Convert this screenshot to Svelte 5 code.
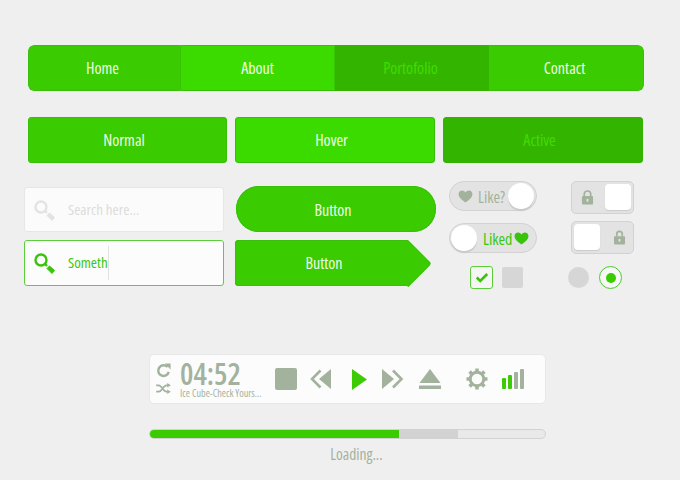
<script>
  const nav = [
    { label: 'Home', cls: '' },
    { label: 'About', cls: 'hover' },
    { label: 'Portofolio', cls: 'active' },
    { label: 'Contact', cls: '' }
  ];
  const buttons = [
    { label: 'Normal', cls: '' },
    { label: 'Hover', cls: 'hover' },
    { label: 'Active', cls: 'active' }
  ];
</script>

<main class="page">
  <nav class="nav">
    {#each nav as item}
      <div class="nav-item {item.cls}">{item.label}</div>
    {/each}
  </nav>

  <div class="states">
    {#each buttons as b}
      <div class="state {b.cls}">{b.label}</div>
    {/each}
  </div>

  <div class="controls">
    <div class="col-search">
      <div class="search">
        <svg class="mag" viewBox="0 0 24 24" width="24" height="24"><circle cx="8" cy="8" r="5.500" fill="none" stroke="#e3e3e3" stroke-width="2.400"/><path d="M12 12l2 2" stroke="#e3e3e3" stroke-width="2.400"/><path d="M14 16.500l2.500-2.500 5 4.500-2.500 3z" fill="#e3e3e3" stroke="#e3e3e3" stroke-linejoin="round"/></svg>
        <span class="placeholder">Search here...</span>
      </div>
      <div class="search focus">
        <svg class="mag" viewBox="0 0 24 24" width="24" height="24"><circle cx="8" cy="8" r="5.500" fill="none" stroke="#38c40a" stroke-width="2.400"/><path d="M12 12l2 2" stroke="#38c40a" stroke-width="2.400"/><path d="M14 16.500l2.500-2.500 5 4.500-2.500 3z" fill="#38c40a" stroke="#38c40a" stroke-linejoin="round"/></svg>
        <span class="typed">Someth</span><span class="caret"></span>
      </div>
    </div>

    <div class="col-buttons">
      <div class="pill">Button</div>
      <div class="arrow"><span>Button</span></div>
    </div>

    <div class="col-toggles">
      <div class="toggle">
        <svg class="heart" viewBox="0 0 16 14" width="15" height="13"><path d="M8 13.500C3 10 .5 7.500.5 4.500.5 2 2.300.500 4.300.500 5.800.500 7.200 1.300 8 2.800 8.800 1.300 10.200.500 11.700.500c2 0 3.800 1.500 3.800 4 0 3-2.500 5.500-7.500 9z" fill="#a3b29c"/></svg>
        <span class="like">Like?</span>
        <span class="knob"></span>
      </div>
      <div class="toggle on">
        <span class="knob"></span>
        <span class="liked">Liked</span>
        <svg class="heart" viewBox="0 0 16 14" width="15" height="13"><path d="M8 13.500C3 10 .5 7.500.5 4.500.5 2 2.300.500 4.300.500 5.800.500 7.200 1.300 8 2.800 8.800 1.300 10.200.500 11.700.500c2 0 3.800 1.500 3.800 4 0 3-2.500 5.500-7.500 9z" fill="#38c40a"/></svg>
      </div>
      <div class="checks">
        <div class="check">
          <svg viewBox="0 0 16 12" width="14" height="11"><path d="M2 6l4 4 8-8" fill="none" stroke="#38c40a" stroke-width="3"/></svg>
        </div>
        <div class="box"></div>
      </div>
    </div>

    <div class="col-locks">
      <div class="lock">
        <svg viewBox="0 0 14 16" width="13" height="15"><path d="M3.500 7V4.500a3.500 3.500 0 0 1 7 0V7" fill="none" stroke="#a3b29c" stroke-width="1.800"/><rect x="1" y="6.500" width="12" height="9" rx="1" fill="#a3b29c"/><rect x="6" y="9.500" width="2" height="3" fill="#e3e3e3"/></svg>
        <span class="sq"></span>
      </div>
      <div class="lock off">
        <span class="sq"></span>
        <svg viewBox="0 0 12 16" width="11" height="15"><path d="M3 7V4.300a3 3 0 0 1 6 0V7" fill="none" stroke="#a3b29c" stroke-width="1.800"/><rect x="0" y="6.500" width="12" height="9" rx="1" fill="#a3b29c"/><rect x="5" y="9.500" width="2" height="3" fill="#e3e3e3"/></svg>
      </div>
      <div class="radios">
        <div class="radio-off"></div>
        <div class="radio-on"><span></span></div>
      </div>
    </div>
  </div>

  <section class="player">
    <div class="modes">
      <svg viewBox="0 0 16 16" width="15" height="15"><path d="M13.600 9.500A5.700 5.700 0 1 1 12.300 4.300" fill="none" stroke="#a3b29c" stroke-width="2.600"/><path d="M9.500 .5h6v6.500z" fill="#a3b29c"/></svg>
      <svg viewBox="0 0 16 12" width="15" height="11"><path d="M0 2.500h3c3 0 5 7 8 7h1.500M0 9.500h3c3 0 5-7 8-7h1.500" fill="none" stroke="#a3b29c" stroke-width="1.900"/><path d="M12 0l4 2.500-4 2.500zM12 7l4 2.500-4 2.500z" fill="#a3b29c"/></svg>
    </div>
    <div class="track">
      <div class="time">04:52</div>
      <div class="song">Ice Cube-Check Yours...</div>
    </div>
    <div class="stop"></div>
    <svg class="rew" viewBox="0 0 22 20" width="22" height="20"><path d="M21 0v20L9 10z" fill="#a3b29c"/><path d="M10.500 1.500L2 10l8.500 8.500" fill="none" stroke="#a3b29c" stroke-width="2.600"/></svg>
    <svg class="play" viewBox="0 0 15 21" width="15" height="21"><path d="M0 0l15 10.500L0 21z" fill="#3ccb05"/></svg>
    <svg class="fwd" viewBox="0 0 22 20" width="22" height="20"><path d="M0 0v20l12-10z" fill="#a3b29c"/><path d="M11 1.500l8.500 8.500-8.500 8.500" fill="none" stroke="#a3b29c" stroke-width="2.600"/></svg>
    <svg class="eject" viewBox="0 0 22 20" width="22" height="20"><path d="M11 0l10.500 14H.5z" fill="#a3b29c"/><rect y="16.500" width="22" height="3.500" fill="#a3b29c"/></svg>
    <svg class="gear" viewBox="0 0 22 22" width="22" height="22"><circle cx="11" cy="11" r="6.800" fill="none" stroke="#a3b29c" stroke-width="3"/><g stroke="#a3b29c" stroke-width="3.600"><path d="M11 .5v3M11 18.500v3M.5 11h3M18.500 11h3M3.600 3.600l2.100 2.100M16.300 16.300l2.100 2.100M18.400 3.600l-2.100 2.100M5.700 16.300l-2.100 2.100"/></g></svg>
    <div class="signal">
      <span class="s1"></span><span class="s2"></span><span class="s3"></span><span class="s4"></span>
    </div>
  </section>

  <div class="progress">
    <div class="fill"></div>
    <div class="buffer"></div>
  </div>
  <div class="loading">Loading...</div>
</main>

<style>
  :global(body) {
    margin: 0;
    background: #efefef;
  }
  .page {
    width: 680px;
    height: 480px;
    box-sizing: border-box;
    padding-top: 45px;
    overflow: hidden;
    font-family: "Open Sans", "Noto Sans", sans-serif;
    font-stretch: 75%;
    font-size: 16px;
    color: #f1fbe9;
  }
  .nav {
    display: grid;
    grid-template-columns: 153px 154px 154px 155px;
    width: 616px;
    height: 46px;
    margin-left: 28px;
    border-radius: 6px;
    overflow: hidden;
  }
  .nav-item {
    display: flex;
    align-items: center;
    justify-content: center;
    box-sizing: border-box;
    background: #3acc00;
    border: 1px solid #38c00a;
    border-width: 1px 0;
    border-right: 1px solid #37c403;
  }
  .nav-item:first-child { border-left: 1px solid #38c00a; border-radius: 6px 0 0 6px; padding-right: 4px; }
  .nav-item:last-child { border-right: 1px solid #38c00a; border-radius: 0 6px 6px 0; padding-right: 3px; }
  .nav-item.hover { background: #3cdb00; }
  .nav-item.active { background: #33b500; color: #41dc00; border-color: #33b500; padding-right: 2px; }
  .states {
    display: flex;
    gap: 8px;
    margin: 26px 0 0 28px;
  }
  .state {
    width: 200px;
    height: 46px;
    box-sizing: border-box;
    display: flex;
    align-items: center;
    justify-content: center;
    padding-right: 7px;
    background: #3acc00;
    border: 1px solid #38bf0a;
    border-radius: 3px;
  }
  .state:first-child { width: 199px; }
  .state.hover { background: #3cdb00; }
  .state.active { background: #33b500; color: #41dc00; border-color: #33b500; }
  .controls {
    display: flex;
    align-items: flex-start;
    margin: 18px 0 0 24px;
  }
  .col-search {
    width: 200px;
    margin-top: 6px;
    display: flex;
    flex-direction: column;
    gap: 8px;
  }
  .search {
    height: 46px;
    box-sizing: border-box;
    display: flex;
    align-items: center;
    background: #fbfbfb;
    border: 1px solid #e6e6e6;
    border-radius: 3px;
    padding-left: 8px;
    font-size: 15px;
  }
  .search:first-child { height: 45px; }
  .mag { flex: none; margin-top: 2px; }
  .placeholder { margin: -2px 0 0 11px; color: #dcdcdc; }
  .search.focus { border-color: #5cce3a; background: #fcfcfc; }
  .typed { margin: -2px 0 0 11px; color: #3cc70b; }
  .caret { width: 1px; height: 34px; background: #e2e2e2; }
  .col-buttons {
    width: 201px;
    margin: 5px 0 0 11px;
    display: flex;
    flex-direction: column;
    gap: 8px;
  }
  .pill {
    width: 200px;
    height: 46px;
    box-sizing: border-box;
    padding: 1px 6px 0 0;
    margin-left: 1px;
    display: flex;
    align-items: center;
    justify-content: center;
    background: #3acc00;
    border-radius: 23px;
    box-shadow: inset 0 0 0 1px #38c00a;
  }
  .arrow {
    position: relative;
    width: 173px;
    height: 46px;
    box-sizing: border-box;
    padding: 0 0 0 5px;
    display: flex;
    align-items: center;
    justify-content: center;
    background: #3acc00;
    border-radius: 4px 0 0 4px;
    box-shadow: inset 1px 0 #38c00a, inset 0 1px #38c00a, inset 0 -1px #38c00a;
  }
  .arrow::after {
    content: "";
    position: absolute;
    top: 6.75px;
    right: -16.25px;
    width: 32.5px;
    height: 32.5px;
    transform: rotate(45deg);
    border-radius: 0 3px 0 0;
    background: #3acc00;
    box-shadow: inset -1px 1px #38c00a;
  }
  .arrow span { position: relative; z-index: 1; }
  .col-toggles {
    width: 88px;
    margin-left: 13px;
    display: flex;
    flex-direction: column;
    gap: 12px;
  }
  .toggle {
    height: 30px;
    box-sizing: border-box;
    display: flex;
    align-items: center;
    background: #e3e3e3;
    border: 1px solid #d2d2d2;
    border-radius: 15px;
    padding: 0 2px 0 8px;
  }
  .toggle.on { padding: 0 8px 0 1px; }
  .toggle .knob {
    flex: none;
    width: 26px;
    height: 26px;
    border-radius: 50%;
    background: #fff;
    box-shadow: 0 2px 1px #c9c9c9;
    margin-left: auto;
    margin-top: -1px;
  }
  .toggle.on .knob { margin-left: 0; }
  .heart { flex: none; }
  .like { margin: 1px 0 0 5px; color: #a3b29c; }
  .liked { margin: 1px 2px 0 6px; color: #3cc70b; }
  .checks {
    display: flex;
    align-items: center;
    gap: 9px;
    margin: 1px 0 0 21px;
  }
  .check {
    width: 23px;
    height: 23px;
    box-sizing: border-box;
    display: flex;
    align-items: center;
    justify-content: center;
    border: 1px solid #5cce3a;
    border-radius: 3px;
    background: #f5f5f5;
  }
  .box {
    width: 21px;
    height: 21px;
    background: #d6d6d6;
    border-radius: 2px;
  }
  .col-locks {
    width: 63px;
    margin-left: 34px;
    display: flex;
    flex-direction: column;
    gap: 7px;
  }
  .lock {
    height: 33px;
    box-sizing: border-box;
    display: flex;
    align-items: center;
    justify-content: space-between;
    background: #e3e3e3;
    border: 1px solid #d2d2d2;
    border-radius: 5px;
    padding: 0 2px 0 9px;
  }
  .lock.off { padding: 0 8px 0 2px; }
  .sq {
    width: 26px;
    height: 26px;
    background: #fff;
    border-radius: 4px;
    box-shadow: 0 1px 1px #c9c9c9;
    margin-top: -1px;
  }
  .radios {
    display: flex;
    align-items: center;
    gap: 10px;
    margin: 5px 0 0 -3px;
  }
  .radio-off {
    width: 21px;
    height: 21px;
    border-radius: 50%;
    background: #d6d6d6;
  }
  .radio-on {
    width: 23px;
    height: 23px;
    box-sizing: border-box;
    border: 1px solid #4ec92a;
    border-radius: 50%;
    background: #f7f7f7;
    display: flex;
    align-items: center;
    justify-content: center;
  }
  .radio-on span {
    width: 10px;
    height: 10px;
    border-radius: 50%;
    background: #3acc00;
  }
  .player {
    display: flex;
    align-items: center;
    width: 397px;
    height: 50px;
    box-sizing: border-box;
    margin: 65px 0 0 149px;
    padding-left: 5px;
    background: #fcfcfc;
    border: 1px solid #e8e8e8;
    border-radius: 5px;
  }
  .modes {
    width: 16px;
    display: flex;
    flex-direction: column;
    gap: 5px;
    align-items: center;
    margin-top: -2px;
  }
  .track { margin-left: 9px; width: 95px; color: #a3b29c; }
  .time {
    font-size: 30px;
    line-height: 28px;
    font-weight: 600;
  }
  .song { font-size: 10.200px; line-height: 11px; white-space: nowrap; }
  .stop {
    width: 22px;
    height: 22px;
    flex: none;
    background: #a3b29c;
    border-radius: 2px;
  }
  .rew { margin-left: 13px; flex: none; }
  .play { margin-left: 20px; flex: none; }
  .fwd { margin-left: 15px; flex: none; }
  .eject { margin-left: 15px; flex: none; }
  .gear { margin-left: 25px; flex: none; }
  .signal {
    margin-left: 14px;
    display: flex;
    align-items: flex-end;
    gap: 2px;
    height: 20px;
  }
  .signal span { width: 4px; border-radius: 1px; background: #a3b29c; }
  .signal .s1 { height: 11px; background: #3ccb05; }
  .signal .s2 { height: 14px; background: #3ccb05; }
  .signal .s3 { height: 17px; }
  .signal .s4 { height: 20px; }
  .progress {
    position: relative;
    display: flex;
    width: 397px;
    height: 10px;
    box-sizing: border-box;
    margin: 25px 0 0 149px;
    background: #e9e9e9;
    border: 1px solid #d2d2d2;
    border-radius: 5px;
    overflow: hidden;
  }
  .fill { width: 249px; background: #3acc00; }
  .buffer { width: 59px; background: #d2d2d2; }
  .loading {
    margin: 4px 0 0 149px;
    width: 415px;
    text-align: center;
    color: #a3b29c;
    font-size: 15.500px;
  }
</style>
